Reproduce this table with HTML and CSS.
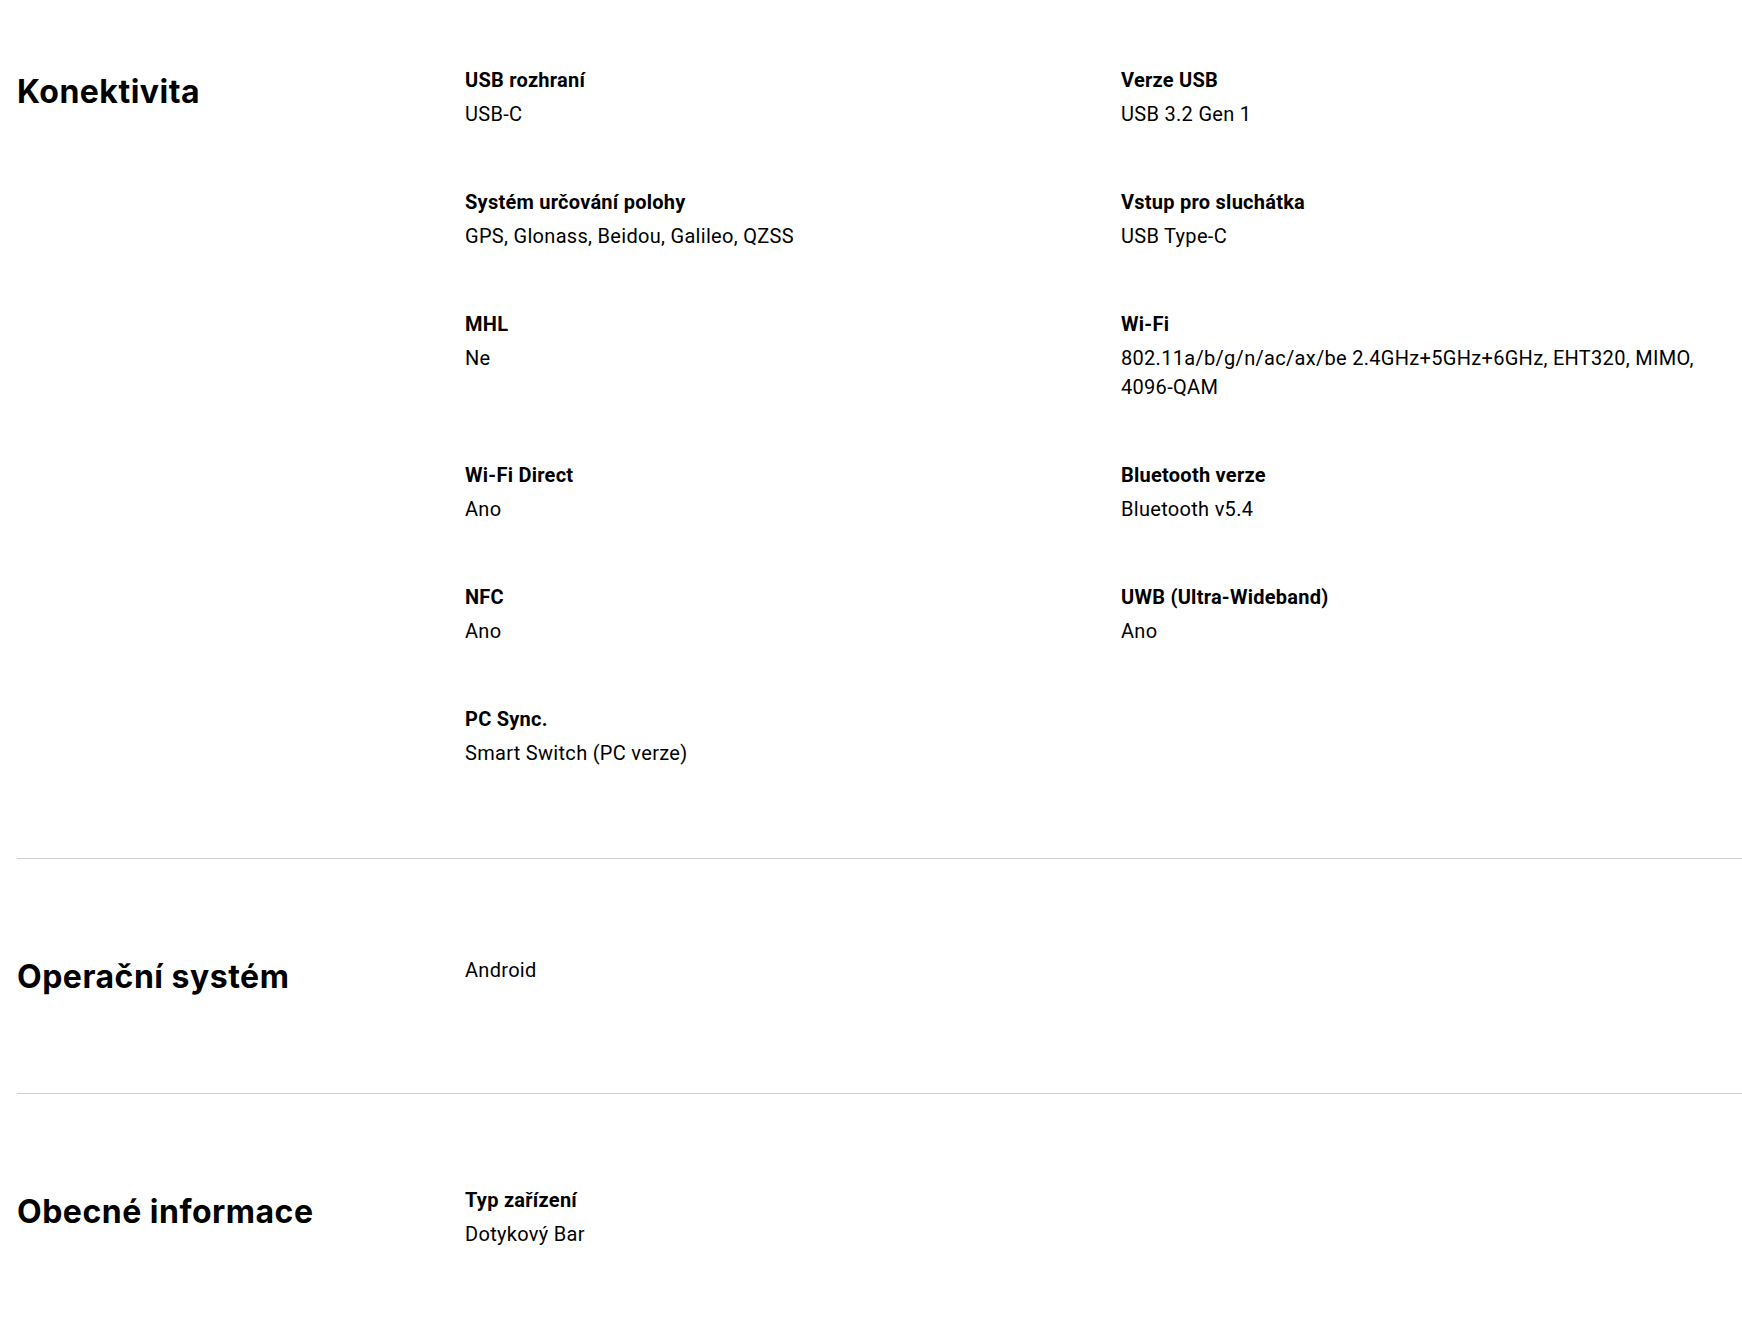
FILE: index.html
```html
<!DOCTYPE html>
<html lang="cs">
<head>
    <meta charset="UTF-8">
    <meta name="viewport" content="width=device-width, initial-scale=1.0">
    <title>Specifikace</title>
    <link rel="stylesheet" href="styles.css">
</head>
<body>
    <div class="specs">
        <section class="spec-section first">
            <h2 class="spec-title">Konektivita</h2>
            <div class="spec-list">
                <div class="spec-item">
                    <p class="spec-name">USB rozhraní</p>
                    <p class="spec-value">USB-C</p>
                </div>
                <div class="spec-item">
                    <p class="spec-name">Verze USB</p>
                    <p class="spec-value">USB 3.2 Gen 1</p>
                </div>
                <div class="spec-item">
                    <p class="spec-name">Systém určování polohy</p>
                    <p class="spec-value">GPS, Glonass, Beidou, Galileo, QZSS</p>
                </div>
                <div class="spec-item">
                    <p class="spec-name">Vstup pro sluchátka</p>
                    <p class="spec-value">USB Type-C</p>
                </div>
                <div class="spec-item">
                    <p class="spec-name">MHL</p>
                    <p class="spec-value">Ne</p>
                </div>
                <div class="spec-item">
                    <p class="spec-name">Wi-Fi</p>
                    <p class="spec-value">802.11a/b/g/n/ac/ax/be 2.4GHz+5GHz+6GHz, EHT320, MIMO, <span class="nowrap">4096-QAM</span></p>
                </div>
                <div class="spec-item">
                    <p class="spec-name">Wi-Fi Direct</p>
                    <p class="spec-value">Ano</p>
                </div>
                <div class="spec-item">
                    <p class="spec-name">Bluetooth verze</p>
                    <p class="spec-value">Bluetooth v5.4</p>
                </div>
                <div class="spec-item">
                    <p class="spec-name">NFC</p>
                    <p class="spec-value">Ano</p>
                </div>
                <div class="spec-item">
                    <p class="spec-name">UWB (Ultra-Wideband)</p>
                    <p class="spec-value">Ano</p>
                </div>
                <div class="spec-item">
                    <p class="spec-name">PC Sync.</p>
                    <p class="spec-value">Smart Switch (PC verze)</p>
                </div>
            </div>
        </section>

        <section class="spec-section">
            <h2 class="spec-title">Operační systém</h2>
            <div class="spec-list">
                <div class="spec-item">
                    <p class="spec-value single">Android</p>
                </div>
            </div>
        </section>

        <section class="spec-section">
            <h2 class="spec-title">Obecné informace</h2>
            <div class="spec-list">
                <div class="spec-item">
                    <p class="spec-name">Typ zařízení</p>
                    <p class="spec-value">Dotykový Bar</p>
                </div>
            </div>
        </section>
    </div>
</body>
</html>
```

FILE: styles.css
```css
body {
    margin: 0;
    padding: 0 0 0 17px;
    background-color: #fff;
    color: #000;
    font-family: Roboto, "Liberation Sans", sans-serif;
}
p {
    margin: 0;
}
.spec-section {
    display: grid;
    grid-template-columns: 448px 1fr;
    align-items: start;
    padding: 92px 0 91px;
    border-top: 1px solid #d0d0d0;
}
.spec-section.first {
    padding: 66px 0 90px;
    border-top: none;
}
.spec-title {
    margin: 0;
    font-family: Inter, "Liberation Sans", sans-serif;
    font-size: 32px;
    font-weight: 700;
    line-height: 51px;
    letter-spacing: 0.5px;
}
.spec-list {
    display: grid;
    grid-template-columns: 1fr 1fr;
    column-gap: 35px;
    row-gap: 59px;
}
.spec-name {
    font-size: 20px;
    font-weight: 700;
    line-height: 28px;
    letter-spacing: 0.25px;
    margin-bottom: 6px;
}
.spec-value {
    font-size: 20px;
    font-weight: 400;
    line-height: 29px;
    letter-spacing: 0.3px;
}
.spec-value.single {
    line-height: 38px;
}
.nowrap {
    white-space: nowrap;
}
```
